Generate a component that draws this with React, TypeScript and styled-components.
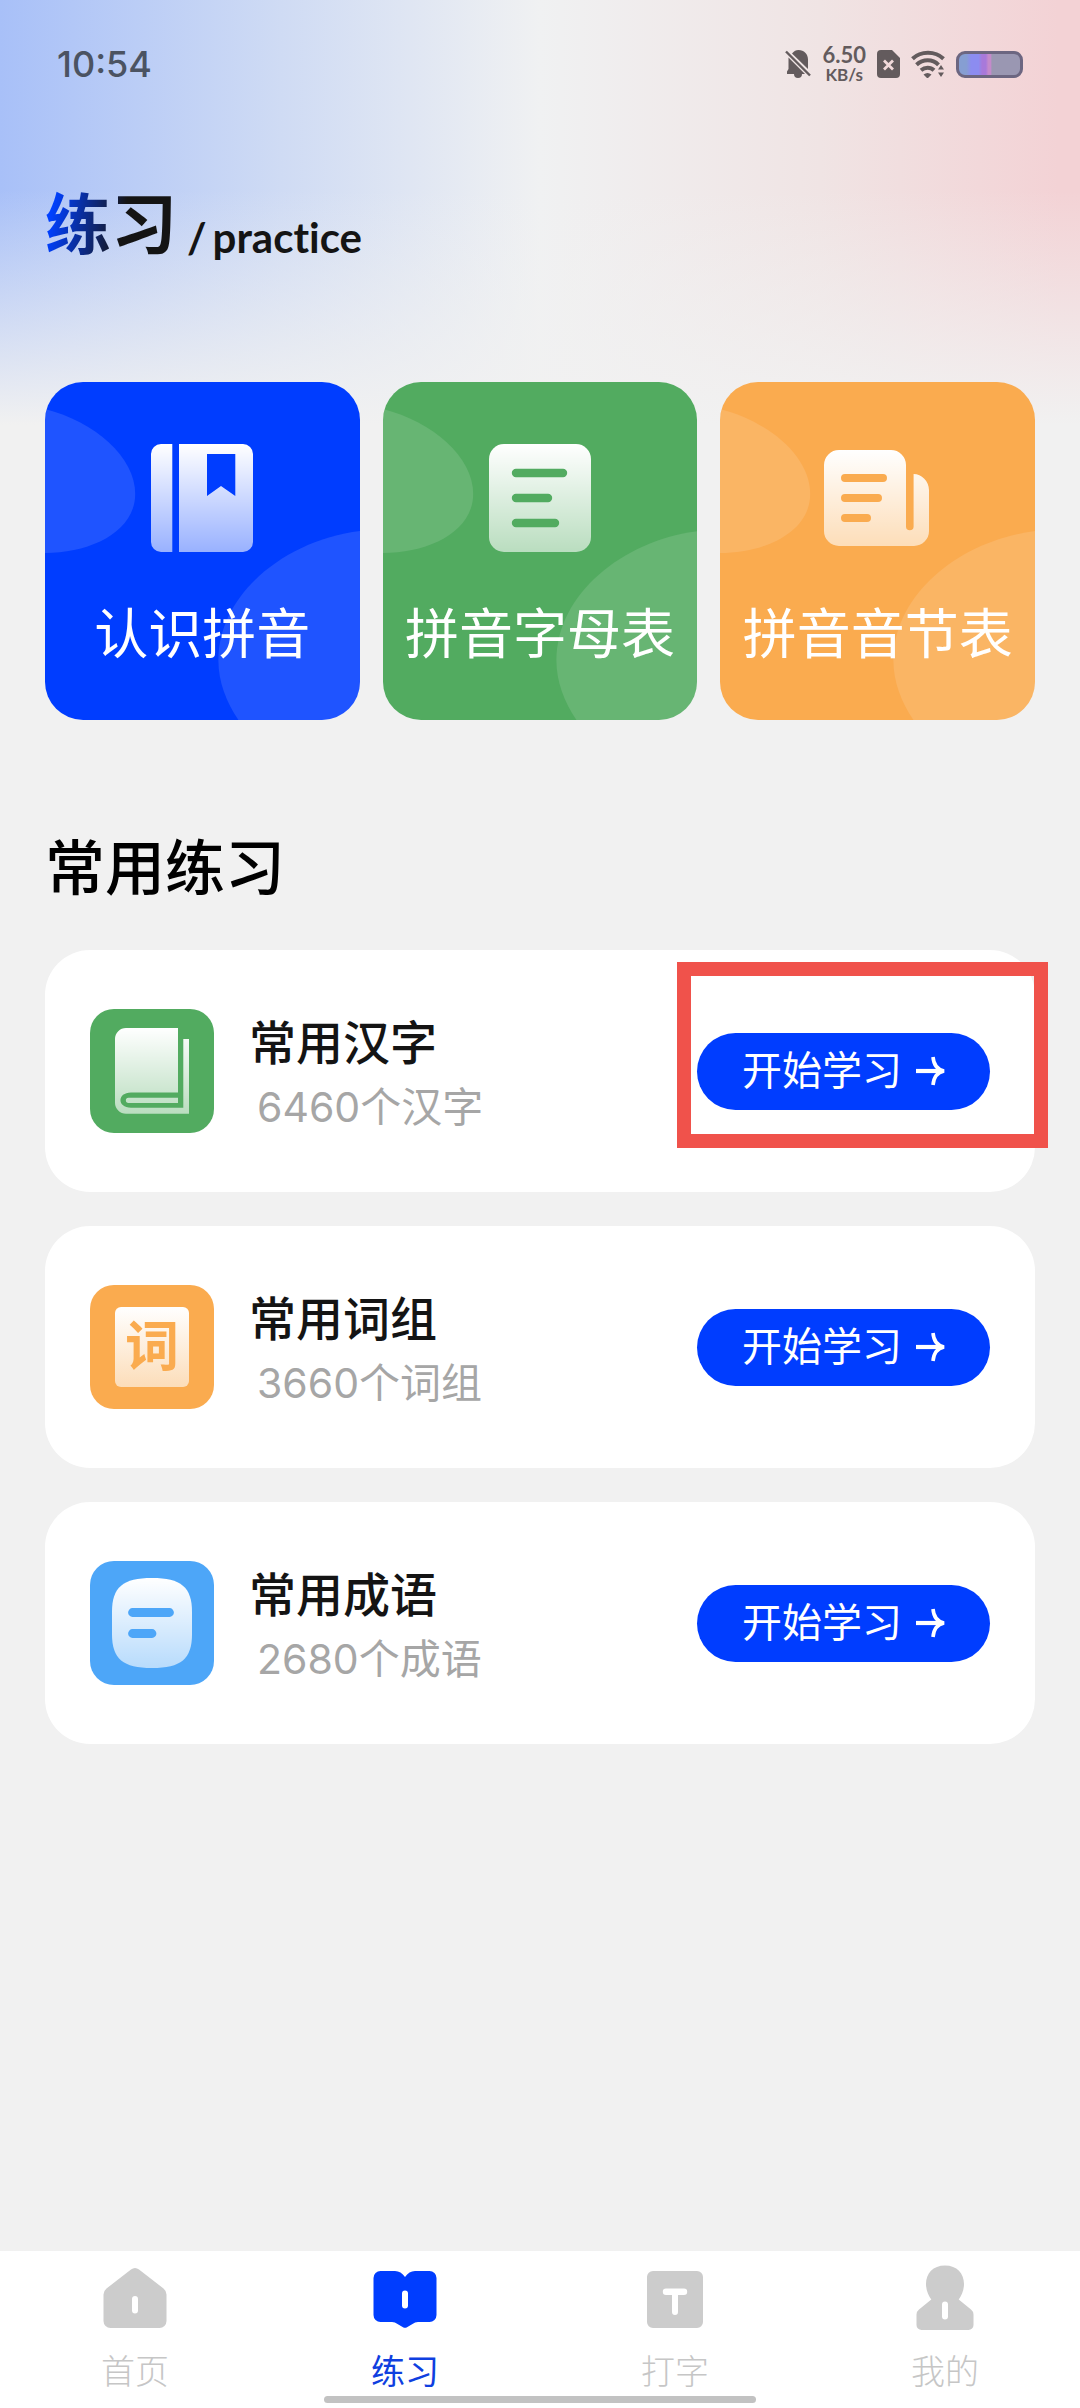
import React from "react";
import styled, { createGlobalStyle } from "styled-components";

const blue = "#003dff";
const green = "#52ab60";
const orange = "#faab4f";
const sky = "#4da6f8";

const GlobalStyle = createGlobalStyle`
  *, *::before, *::after { box-sizing: border-box; }
  body {
    margin: 0;
    background: #f1f1f1;
    font-family: Inter, "Noto Sans CJK SC", sans-serif;
    color: #141414;
  }
  h1, h2, h3, p, ul { margin: 0; padding: 0; }
  ul { list-style: none; }
  a { color: inherit; text-decoration: none; }
  button { font: inherit; border: 0; cursor: pointer; }
  svg { display: block; }
`;

const Page = styled.div`
  min-height: 100vh;
  display: flex;
  flex-direction: column;
  background:
    linear-gradient(to bottom, rgba(241, 241, 241, 0) 190px, #f1f1f1 425px),
    linear-gradient(to right, #a8c0f8 0%, #cfdbf4 26%, #f0f1f2 50%, #f0e4e4 76%, #f3d2d5 98%);
`;

const StatusBar = styled.div`
  display: flex;
  align-items: center;
  justify-content: space-between;
  height: 128px;
  padding: 0 57px;
  color: #635b5d;
`;

const Clock = styled.time`
  font-size: 36px;
  line-height: 40px;
  font-weight: 500;
  color: #4b5362;
`;

const StatusIcons = styled.div`
  display: flex;
  align-items: center;
  gap: 11px;
`;

const NetSpeed = styled.div`
  display: flex;
  flex-direction: column;
  align-items: center;
  font-family: Lato, sans-serif;
  font-weight: 700;
`;

const NetValue = styled.span`
  font-size: 22px;
  line-height: 22px;
`;

const NetUnit = styled.span`
  font-size: 17px;
  line-height: 18px;
`;

const Battery = styled.div`
  width: 67px;
  height: 27px;
  border: 3px solid #6c6681;
  border-radius: 9px;
  background: linear-gradient(to right, #869ed2 0 12%, #8c8cf0 20% 32%, #a879da 38% 44%, #c48acb 48% 52%, #9a97b2 54%);
`;

const Main = styled.main`
  flex: 1;
  padding: 52px 45px 60px;
`;

const Heading = styled.header`
  display: flex;
  align-items: flex-end;
  gap: 10px;
`;

const Title = styled.h1`
  font-size: 66px;
  line-height: 90px;
  font-weight: 700;
  color: transparent;
  background: linear-gradient(100deg, #0040ff 8%, #12204f 46%, #141414 58%);
  background-clip: text;
  -webkit-background-clip: text;
`;

const Subtitle = styled.p`
  display: flex;
  gap: 6px;
  font-family: Lato, sans-serif;
  font-size: 42px;
  line-height: 66px;
  font-weight: 700;
  font-variant-ligatures: none;
`;

const Tiles = styled.nav`
  display: grid;
  grid-template-columns: repeat(3, 1fr);
  gap: 23px;
  margin-top: 112px;
`;

const Tile = styled.a<{ $color: string }>`
  position: relative;
  display: flex;
  flex-direction: column;
  align-items: center;
  gap: 38px;
  padding: 53px 0 49px;
  border-radius: 38px;
  overflow: hidden;
  background: ${(p) => p.$color};
`;

const TileShade = styled.svg`
  position: absolute;
  inset: 0;
  width: 100%;
  height: 100%;
`;

const TileIcon = styled.svg`
  position: relative;
  width: 126px;
  height: 126px;
`;

const TileLabel = styled.span`
  position: relative;
  font-size: 54px;
  line-height: 72px;
  color: #fff;
  white-space: nowrap;
`;

const SectionTitle = styled.h2`
  margin-top: 104px;
  font-size: 60px;
  line-height: 88px;
  font-weight: 500;
  color: #000;
`;

const List = styled.ul`
  display: flex;
  flex-direction: column;
  gap: 34px;
  margin-top: 38px;
`;

const Row = styled.li`
  position: relative;
  display: flex;
  align-items: center;
  gap: 35px;
  padding: 53px 45px;
  border-radius: 45px;
  background: #fff;
`;

const RowIcon = styled.div<{ $color: string }>`
  display: grid;
  place-items: center;
  width: 124px;
  height: 124px;
  border-radius: 24px;
  background: ${(p) => p.$color};
`;

const WordTile = styled.span`
  display: grid;
  place-items: center;
  width: 74px;
  height: 80px;
  border-radius: 6px;
  background: linear-gradient(to bottom, #fff, #fcddb9);
  font-size: 54px;
  line-height: 80px;
  font-weight: 700;
  color: ${orange};
`;

const RowText = styled.div`
  flex: 1;
  padding-top: 8px;
`;

const RowTitle = styled.h3`
  font-size: 47px;
  line-height: 64px;
  font-weight: 500;
`;

const RowCount = styled.p`
  padding-left: 8px;
  font-size: 41px;
  line-height: 64px;
  font-weight: 400;
  color: #a6a6a6;
`;

const StartButton = styled.button`
  display: flex;
  align-items: center;
  gap: 14px;
  height: 77px;
  padding: 0 45px;
  border-radius: 39px;
  background: ${blue};
  color: #fff;
  font-size: 40px;
  line-height: 60px;
  white-space: nowrap;
`;

const Highlight = styled.span`
  position: absolute;
  top: 12px;
  right: -13px;
  width: 371px;
  height: 186px;
  border: 14px solid #f0524b;
  pointer-events: none;
`;

const TabBar = styled.nav`
  display: grid;
  grid-template-columns: repeat(4, 1fr);
  padding: 11px 0 5px;
  background: #fff;
`;

const Tab = styled.a<{ $active?: boolean }>`
  display: flex;
  flex-direction: column;
  align-items: center;
  gap: 13px;
  color: ${(p) => (p.$active ? blue : "#ccc")};
  font-size: 34px;
  line-height: 49px;
`;

const TabLabel = styled.span<{ $active?: boolean }>`
  font-weight: ${(p) => (p.$active ? 400 : 300)};
  color: ${(p) => (p.$active ? "#0f3fe0" : "#c6c6c6")};
`;

const HomeIndicator = styled.div`
  grid-column: 1 / -1;
  justify-self: center;
  width: 40%;
  height: 7px;
  border-radius: 4px;
  background: #c2c2c2;
`;

const Fade = ({ id }: { id: string }) => (
  <linearGradient id={id} x1="0" y1="0" x2="0" y2="1">
    <stop offset="0" stopColor="#fff" />
    <stop offset="1" stopColor="#fff" stopOpacity="0.6" />
  </linearGradient>
);

const Shade = () => (
  <TileShade viewBox="0 0 314 338" preserveAspectRatio="none" fill="#fff" fillOpacity="0.12" aria-hidden="true">
    <path d="M0 27C50 40 90 75 90 112 90 150 45 171 0 171Z" />
    <path d="M315 149C240 158 173 212 173 278 173 300 181 320 193 338H315Z" />
  </TileShade>
);

const NotebookIcon = () => (
  <TileIcon viewBox="94 53 126 126" aria-hidden="true">
    <defs><Fade id="fade-notebook" /></defs>
    <path
      fill="url(#fade-notebook)"
      fillRule="evenodd"
      d="M116 62h11.300v108H116a10 10 0 0 1-10-10V72a10 10 0 0 1 10-10ZM134 62h64a10 10 0 0 1 10 10v88a10 10 0 0 1-10 10h-64ZM162 72v42l14-10 14.300 10V72Z"
    />
  </TileIcon>
);

const SheetIcon = () => (
  <TileIcon viewBox="94 53 126 126" aria-hidden="true">
    <defs><Fade id="fade-sheet" /></defs>
    <rect x="106" y="62" width="102" height="108" rx="15" fill="url(#fade-sheet)" />
    <path d="M133 91h47M133 116h32M133 141h39" stroke={green} strokeWidth="8.400" strokeLinecap="round" />
  </TileIcon>
);

const NewsIcon = () => (
  <TileIcon viewBox="94 53 126 126" aria-hidden="true">
    <defs><Fade id="fade-news" /></defs>
    <path
      fill="url(#fade-news)"
      d="M118 68h52a15 15 0 0 1 15 15v61.500a3.800 3.800 0 0 0 7.600 0V92c8 0 15.400 7 15.400 16v41a15 15 0 0 1-15 15h-75a15 15 0 0 1-15-15V83a15 15 0 0 1 15-15Z"
    />
    <path d="M124 96h38M124 116h33M124 136h22" stroke={orange} strokeWidth="8" strokeLinecap="round" />
  </TileIcon>
);

const BookIcon = () => (
  <svg width="124" height="124" viewBox="0 0 124 124" aria-hidden="true">
    <defs>
      <linearGradient id="fade-book" gradientUnits="userSpaceOnUse" x1="0" y1="19" x2="0" y2="105">
        <stop offset="0" stopColor="#fff" />
        <stop offset="1" stopColor="#fff" stopOpacity="0.6" />
      </linearGradient>
    </defs>
    <g fill="url(#fade-book)">
      <path d="M36 19h52v64.500H41c-14 0-14 15.200 0 15.200h52.300V30H99v74.700H36a11 11 0 0 1-11-11V30a11 11 0 0 1 11-11Z" />
      <path d="M38.500 88.700H88V94H38.500a2.650 2.650 0 0 1 0-5.300Z" />
    </g>
  </svg>
);

const IdiomIcon = () => (
  <svg width="124" height="124" viewBox="0 0 124 124" aria-hidden="true">
    <defs><Fade id="fade-idiom" /></defs>
    <path
      fill="url(#fade-idiom)"
      d="M62 17c29 0 40 9 40 34v22c0 25-11 34-40 34s-40-9-40-34V51c0-25 11-34 40-34Z"
    />
    <path d="M42.500 51.500H79.500M42.500 72.500H62" stroke={sky} strokeWidth="8.800" strokeLinecap="round" />
  </svg>
);

const ArrowIcon = () => (
  <svg width="29" height="30" viewBox="0 0 29 30" fill="none" stroke="#fff" strokeWidth="3.600" aria-hidden="true">
    <path d="M0 15h25" strokeWidth="4.200" />
    <path d="M17 1c.6 7.500 4 12.500 11 14-7 1.500-10.400 6.500-11 14" />
  </svg>
);

const MutedIcon = () => (
  <svg width="26" height="30" viewBox="0 0 26 30" aria-hidden="true">
    <path
      fill="currentColor"
      d="M7 4.500C9 2 11 1 13.500 1 19 1 23 5 23 10.500V20ZM3.500 8.500 20 25H17a4 4 0 0 1-8 0H2v-2.500L3.500 20Z"
    />
    <path d="M1 2.500 25 26.500" stroke="currentColor" strokeWidth="2.400" />
  </svg>
);

const SimIcon = () => (
  <svg width="23" height="28" viewBox="0 0 23 28" aria-hidden="true">
    <path fill="currentColor" d="M4 0h11l8 8v16a4 4 0 0 1-4 4H4a4 4 0 0 1-4-4V4a4 4 0 0 1 4-4Z" />
    <path d="M7 10.500l9 9M16 10.500l-9 9" stroke="#f1d9da" strokeWidth="2.800" />
  </svg>
);

const WifiIcon = () => (
  <svg width="34" height="28" viewBox="0 0 34 28" fill="none" aria-hidden="true">
    <g stroke="currentColor" strokeWidth="4">
      <path d="M1.500 8.700C10 .7 24 .7 32.500 8.700" />
      <path d="M5.500 14.800c6.500-6 16-6 22 0" />
      <path d="M10 20.300c4-3.400 9.500-3.400 13 0" />
    </g>
    <path fill="currentColor" d="M12.500 24.500q4-3 8 0L16.500 28.500ZM27 19.500l3-4.500 3 4.500ZM27 22.500h6l-3 4.500Z" />
  </svg>
);

const TabIcon = ({ d }: { d: string }) => (
  <svg width="72" height="72" viewBox="0 0 72 72" fill="currentColor" fillRule="evenodd" aria-hidden="true">
    <path d={d} />
  </svg>
);

const tiles = [
  { label: "认识拼音", color: blue, Icon: NotebookIcon },
  { label: "拼音字母表", color: green, Icon: SheetIcon },
  { label: "拼音音节表", color: orange, Icon: NewsIcon },
];

const lessons = [
  { title: "常用汉字", count: "6460个汉字", color: green, icon: <BookIcon />, highlighted: true },
  { title: "常用词组", count: "3660个词组", color: orange, icon: <WordTile>词</WordTile> },
  { title: "常用成语", count: "2680个成语", color: sky, icon: <IdiomIcon /> },
];

const tabs = [
  {
    label: "首页",
    d: "M32 7.500q4-3 8 0L64.500 26.500q3 2.500 3 6V59a7 7 0 0 1-7 7H11.500a7 7 0 0 1-7-7V32.500q0-3.500 3-6ZM33 37v11.500a3 3 0 0 0 6 0V37a3 3 0 0 0-6 0Z",
  },
  {
    label: "练习",
    active: true,
    d: "M11.500 9H26q6 0 10 6 4-6 10-6h14.500a7 7 0 0 1 7 7v37a7 7 0 0 1-7 7H49q-3 0-5.500 2L38 65.300q-2 1-4 0L28.500 62Q26 60 23 60H11.500a7 7 0 0 1-7-7V16a7 7 0 0 1 7-7ZM33 31.500v12a3 3 0 0 0 6 0v-12a3 3 0 0 0-6 0Z",
  },
  {
    label: "打字",
    d: "M14 9h44a6 6 0 0 1 6 6v45a6 6 0 0 1-6 6H14a6 6 0 0 1-6-6V15a6 6 0 0 1 6-6ZM27 26.500a3.200 3.200 0 0 0 0 6.400h6V50a3 3 0 0 0 6 0V32.900h6a3.200 3.200 0 0 0 0-6.400Z",
  },
  {
    label: "我的",
    d: "M36 3.500c12 0 19 8 19 18.500 0 6-2.500 12-5.300 15.500L62 47.500q2.500 2 2.500 5V63a5 5 0 0 1-5 5h-47a5 5 0 0 1-5-5V52.500q0-3 2.500-5L22.300 37.500C19.500 34 17 28 17 22 17 11.500 24 3.500 36 3.500ZM33 42.500v12a3 3 0 0 0 6 0v-12a3 3 0 0 0-6 0Z",
  },
];

export default function App() {
  return (
    <>
      <GlobalStyle />
      <Page>
        <StatusBar>
          <Clock>10:54</Clock>
          <StatusIcons>
            <MutedIcon />
            <NetSpeed>
              <NetValue>6.50</NetValue>
              <NetUnit>KB/s</NetUnit>
            </NetSpeed>
            <SimIcon />
            <WifiIcon />
            <Battery />
          </StatusIcons>
        </StatusBar>

        <Main>
          <Heading>
            <Title>练习</Title>
            <Subtitle>
              <span>/</span>
              <span>practice</span>
            </Subtitle>
          </Heading>

          <Tiles>
            {tiles.map(({ label, color, Icon }) => (
              <Tile key={label} href="#" $color={color}>
                <Shade />
                <Icon />
                <TileLabel>{label}</TileLabel>
              </Tile>
            ))}
          </Tiles>

          <SectionTitle>常用练习</SectionTitle>
          <List>
            {lessons.map((lesson) => (
              <Row key={lesson.title}>
                <RowIcon $color={lesson.color}>{lesson.icon}</RowIcon>
                <RowText>
                  <RowTitle>{lesson.title}</RowTitle>
                  <RowCount>{lesson.count}</RowCount>
                </RowText>
                <StartButton type="button">
                  开始学习
                  <ArrowIcon />
                </StartButton>
                {lesson.highlighted && <Highlight />}
              </Row>
            ))}
          </List>
        </Main>

        <TabBar>
          {tabs.map((tab) => (
            <Tab key={tab.label} href="#" $active={tab.active} aria-current={tab.active ? "page" : undefined}>
              <TabIcon d={tab.d} />
              <TabLabel $active={tab.active}>{tab.label}</TabLabel>
            </Tab>
          ))}
          <HomeIndicator />
        </TabBar>
      </Page>
    </>
  );
}
